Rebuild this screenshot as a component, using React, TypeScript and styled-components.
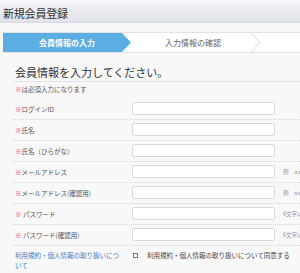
import React from "react";
import styled, { createGlobalStyle } from "styled-components";

const Global = createGlobalStyle`
  html, body { margin: 0; padding: 0; overflow: hidden; }
  body {
    background: #f8f8f8;
    font-family: "Noto Sans CJK JP", "Noto Sans", sans-serif;
    color: #444;
  }
`;

const Page = styled.div`
  width: 300px;
  height: 273px;
  overflow: hidden;
`;

const Header = styled.header`
  height: 23px;
  box-sizing: border-box;
  padding: 3px 0 0 3px;
  display: flex;
  align-items: center;
  background: linear-gradient(#fbfbfc 0%, #f1f2f5 20%, #dfe2e8 100%);
  border-bottom: 1px solid #d7dae0;
  font-size: 11px;
  color: #333;
  letter-spacing: -0.2px;
`;

const StepBar = styled.div`
  margin: 9px 0 0 3px;
  height: 21px;
  box-sizing: border-box;
  display: flex;
  background: #fff;
  border-top: 1px solid #e2e2e2;
  border-bottom: 1px solid #e2e2e2;
`;

const ActiveStep = styled.div`
  width: 128px;
  flex: none;
  display: flex;
  align-items: center;
  justify-content: center;
  background: #5caee2;
  color: #fff;
  font-size: 8px;
  font-weight: bold;
  clip-path: polygon(0 0, calc(100% - 9px) 0, 100% 50%, calc(100% - 9px) 100%, 0 100%);
`;

const Step = styled.div`
  width: 130px;
  flex: none;
  display: flex;
  align-items: stretch;
  color: #666;
  font-size: 8px;
`;

const StepLabel = styled.span`
  flex: 1;
  display: flex;
  align-items: center;
  justify-content: center;
  padding-left: 4px;
`;

const Content = styled.main`
  padding-left: 13px;
`;

const Heading = styled.h1`
  margin: 12px 0 0 0;
  padding: 0 0 2px 2px;
  font-size: 11px;
  line-height: 14px;
  font-weight: normal;
  color: #333;
  border-bottom: 1px solid #e4e4e4;
  white-space: nowrap;
`;

const Note = styled.p`
  margin: 2px 0 0 2px;
  font-size: 6.5px;
  line-height: 10px;
  color: #555;
`;

const Mark = styled.span`
  color: #e8504f;
`;

const Form = styled.div`
  margin-top: 5px;
`;

const Row = styled.div<{ $last?: boolean }>`
  display: flex;
  align-items: ${(p) => (p.$last ? "flex-start" : "center")};
  padding: ${(p) => (p.$last ? "4px 0 0 0" : "3px 0 4px 0")};
  border-bottom: ${(p) => (p.$last ? "none" : "1px dotted #d6d6d6")};
  white-space: nowrap;
`;

const Label = styled.div`
  width: 119px;
  box-sizing: border-box;
  padding: 0 8px 0 2px;
  flex: none;
  font-size: 6.5px;
  line-height: 10px;
  color: #555;
  white-space: normal;
`;

const Input = styled.input`
  width: 143px;
  height: 13px;
  box-sizing: border-box;
  flex: none;
  margin: 0;
  padding: 0 3px;
  border: 1px solid #d9d9d9;
  border-radius: 2px;
  background: #fff;
  font-size: 7px;
`;

const Hint = styled.span`
  margin-left: 8px;
  font-size: 5.5px;
  color: #999;
  white-space: nowrap;
`;

const Link = styled.a`
  color: #3b7dc4;
  text-decoration: none;
`;

const Agree = styled.label`
  display: flex;
  align-items: center;
  height: 10px;
  font-size: 6.5px;
  color: #444;
`;

const Check = styled.input`
  appearance: none;
  width: 5px;
  height: 5px;
  margin: 0 9px 0 1px;
  border: 1px solid #777;
  background: #fff;
  box-sizing: border-box;
`;

const rows: { label: string; hint?: string }[] = [
  { label: "ログインID" },
  { label: "氏名" },
  { label: "氏名（ひらがな）" },
  { label: "メールアドレス", hint: "例　aaa@example.com" },
  { label: "メールアドレス(確認用)", hint: "例　aaa@example.com" },
  { label: " パスワード", hint: "6文字以上の半角英数字" },
  { label: " パスワード(確認用)", hint: "6文字以上の半角英数字" },
];

export default function App() {
  return (
    <Page>
      <Global />
      <Header>新規会員登録</Header>
      <StepBar>
        <ActiveStep>会員情報の入力</ActiveStep>
        <Step>
          <StepLabel>入力情報の確認</StepLabel>
          <svg width="10" height="19" viewBox="0 0 10 19">
            <path d="M0.5 0 L9 9.5 L0.5 19" fill="none" stroke="#dcdcdc" strokeWidth="1" />
          </svg>
        </Step>
      </StepBar>
      <Content>
        <Heading>会員情報を入力してください。</Heading>
        <Note>
          <Mark>※</Mark>は必須入力になります
        </Note>
        <Form>
          {rows.map((r) => (
            <Row key={r.label}>
              <Label>
                <Mark>※</Mark>
                {r.label}
              </Label>
              <Input type="text" />
              {r.hint && <Hint>{r.hint}</Hint>}
            </Row>
          ))}
          <Row $last>
            <Label>
              <Link href="#">利用規約・個人情報の取り扱いについて</Link>
            </Label>
            <Agree>
              <Check type="checkbox" />
              利用規約・個人情報の取り扱いについて同意する
            </Agree>
          </Row>
        </Form>
      </Content>
    </Page>
  );
}
